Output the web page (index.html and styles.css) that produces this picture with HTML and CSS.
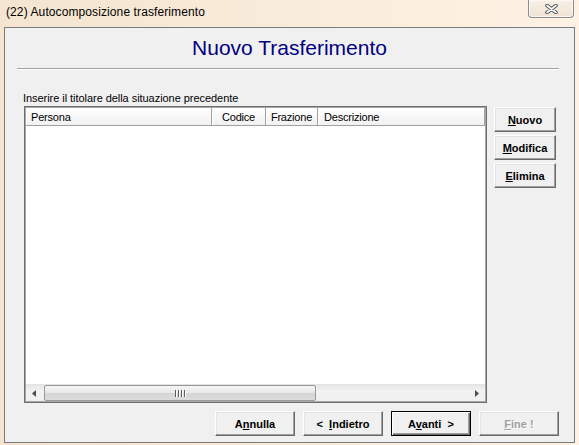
FILE: index.html
```html
<!DOCTYPE html>
<html>
<head>
<meta charset="utf-8">
<link rel="stylesheet" href="styles.css">
</head>
<body>
<div class="window">
  <div class="titlebar">
    <span class="title">(22) Autocomposizione trasferimento</span>
    <div class="close">
      <svg width="13" height="10" viewBox="0 0 13 10">
        <path d="M2 1.5 L11 8.5 M11 1.5 L2 8.5" stroke="#55575c" stroke-width="3.6" stroke-linecap="round"/>
        <path d="M2 1.5 L11 8.5 M11 1.5 L2 8.5" stroke="#ffffff" stroke-width="1.6" stroke-linecap="round"/>
      </svg>
    </div>
  </div>
  <div class="client">
    <div class="heading">Nuovo Trasferimento</div>
    <div class="rule"></div>
    <div class="label">Inserire il titolare della situazione precedente</div>
    <div class="main">
      <div class="listbox">
        <div class="header">
          <div class="col c1">Persona</div>
          <div class="col c2 center">Codice</div>
          <div class="col c3 center">Frazione</div>
          <div class="col c4">Descrizione</div>
        </div>
        <div class="listbody"></div>
        <div class="hscroll">
          <div class="arrow"><svg width="5" height="7" viewBox="0 0 5 7"><path d="M4 0 L0 3.5 L4 7 Z" fill="#4d4d4d"/></svg></div>
          <div class="thumb"><span class="grip"></span><span class="grip"></span><span class="grip"></span><span class="grip"></span></div>
          <div class="track"></div>
          <div class="arrow"><svg width="5" height="7" viewBox="0 0 5 7"><path d="M1 0 L5 3.5 L1 7 Z" fill="#4d4d4d"/></svg></div>
        </div>
      </div>
      <div class="side">
        <button class="btn small"><u>N</u>uovo</button>
        <button class="btn small"><u>M</u>odifica</button>
        <button class="btn small"><u>E</u>limina</button>
      </div>
    </div>
    <div class="footer">
      <button class="btn wide">A<u>n</u>nulla</button>
      <button class="btn wide">&lt;&nbsp; <u>I</u>ndietro</button>
      <button class="btn wide default">A<u>v</u>anti&nbsp; &gt;</button>
      <button class="btn wide disabled"><u>F</u>ine !</button>
    </div>
  </div>
</div>
</body>
</html>
```

FILE: styles.css
```css
* { box-sizing: border-box; }
html, body { margin: 0; padding: 0; }
body {
  width: 579px;
  height: 445px;
  overflow: hidden;
  background: linear-gradient(90deg, #f4e4d0 0%, #f9ebd9 45%, #fdf2e4 100%);
  font-family: "Liberation Sans", Arial, sans-serif;
}
.window { width: 579px; height: 445px; display: flex; flex-direction: column; }
.titlebar {
  height: 27px;
  display: flex;
  align-items: flex-start;
}
.title {
  font-family: "Liberation Sans", Arial, sans-serif;
  font-size: 12px;
  color: #000;
  padding-left: 6px;
  padding-top: 5px;
  line-height: 15px;
  letter-spacing: 0.1px;
}
.close {
  margin-left: auto;
  margin-right: 5px;
  width: 46px;
  height: 18px;
  border: 1px solid #8a8c90;
  border-top: none;
  border-radius: 0 0 4px 4px;
  background: linear-gradient(#f8f0e6, #efe3d3);
  box-shadow: inset 0 0 0 1px rgba(255,255,255,0.6);
  display: flex;
  align-items: center;
  justify-content: center;
}
.client {
  margin-left: 4px;
  width: 571px;
  height: 416px;
  border: 1px solid #7b7b7b;
  background: #f0f0f0;
  display: flex;
  flex-direction: column;
  font-size: 11px;
}
.heading {
  margin-top: 8px;
  height: 23px;
  line-height: 23px;
  text-align: center;
  font-size: 21px;
  color: #000080;
}
.rule {
  margin: 9px 15px 0 12px;
  height: 2px;
  border-top: 1px solid #a0a0a0;
  border-bottom: 1px solid #ffffff;
}
.label {
  margin-top: 22px;
  margin-left: 18px;
  line-height: 13px;
  color: #000;
  letter-spacing: -0.05px;
}
.main {
  display: flex;
  margin-top: 1px;
  margin-left: 19px;
}
.listbox {
  width: 463px;
  height: 297px;
  border: 1px solid #6e6e6e;
  box-shadow: inset 0 0 0 1px #a8a8a8;
  padding: 1px;
  background: #fff;
  display: flex;
  flex-direction: column;
}
.header {
  display: flex;
  height: 18px;
  background: linear-gradient(#ffffff, #f1f1f1);
  border-bottom: 1px solid #a0a0a0;
}
.col {
  height: 17px;
  line-height: 18px;
  border-right: 1px solid #a0a0a0;
  box-shadow: inset 1px 0 #ffffff;
  color: #000;
  white-space: nowrap;
  letter-spacing: -0.2px;
}
.c1 { width: 186px; padding-left: 5px; }
.c2 { width: 54px; }
.c3 { width: 52px; }
.c4 { flex: 1; padding-left: 6px; }
.center { text-align: center; }
.listbody { flex: 1; background: #fff; }
.hscroll {
  height: 17px;
  display: flex;
  background: linear-gradient(#e6e6e6, #f2f2f2 40%, #f0f0f0);
  border-top: 1px solid #e3e3e3;
}
.arrow {
  width: 17px;
  display: flex;
  align-items: center;
  justify-content: center;
}
.thumb {
  width: 272px;
  margin-left: 1px;
  height: 16px;
  border: 1px solid #999999;
  border-radius: 2px;
  background: linear-gradient(#f5f5f5, #e8e8e8 50%, #d5d5d5 51%, #dcdcdc);
  display: flex;
  align-items: center;
  justify-content: center;
  gap: 1px;
}
.grip {
  width: 1px;
  height: 7px;
  background: #5c5c5c;
  box-shadow: 1px 0 #ffffff;
  margin-right: 1px;
}
.track { flex: 1; }
.side {
  margin-left: 7px;
  margin-top: 1px;
  display: flex;
  flex-direction: column;
  gap: 3px;
}
.btn {
  font-family: "Liberation Sans", Arial, sans-serif;
  font-size: 11px;
  font-weight: bold;
  color: #000;
  background: #f0f0f0;
  border: 1px solid;
  border-color: #ffffff #696969 #696969 #ffffff;
  box-shadow: inset -1px -1px #a0a0a0, inset 1px 1px #e3e3e3;
  padding: 0;
  margin: 0;
  white-space: nowrap;
}
.small { width: 62px; height: 25px; }
.wide { width: 80px; height: 25px; }
.footer {
  display: flex;
  justify-content: flex-end;
  gap: 8px;
  margin-top: 8px;
  padding-right: 15px;
}
.default {
  border: 1px solid #000;
  box-shadow: inset 1px 1px #ffffff, inset -1px -1px #696969, inset -2px -2px #a0a0a0;
}
.disabled {
  color: #a0a0a0;
  text-shadow: 1px 1px #ffffff;
}
```
